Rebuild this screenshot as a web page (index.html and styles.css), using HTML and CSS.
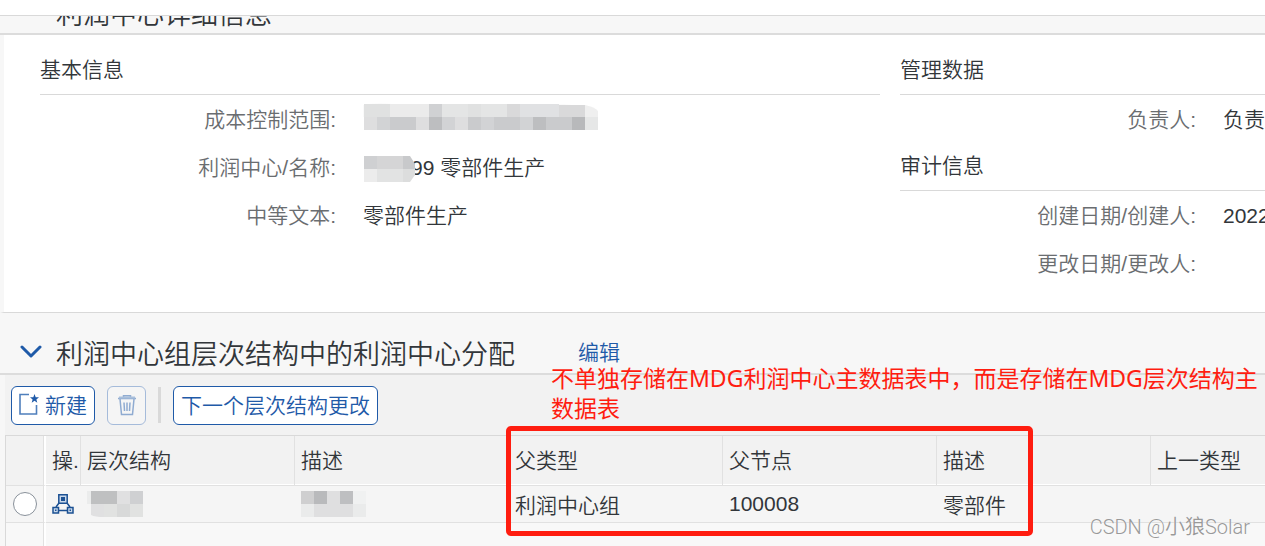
FILE: index.html
```html
<!DOCTYPE html>
<html lang="zh-CN">
	<head>
		<meta charset="UTF-8"/>
		<title>利润中心</title>
		<meta name="viewport" content="width=device-width, initial-scale=1"/>
		<link rel="stylesheet" href="styles.css">
	</head>
	<body>
		<header class="section-header section-header-scrolled">
			<h2 class="section-title">利润中心详细信息</h2>
		</header>

		<section class="details">
			<div class="group">
				<h3 class="group-title">基本信息</h3>
				<dl class="fields">
					<dt>成本控制范围:</dt>
					<dd>
						<svg class="mosaic" width="236" height="34" viewBox="0 0 236 34" aria-hidden="true">
							<path fill="#fafafa" d="M0 2Q12-1 30 1H200L220 3V14H0z"/>
							<g shape-rendering="crispEdges">
								<path fill="#e0e1e1" d="M1 1h26v13H1zM105 1h13v13h-13z"/>
								<path fill="#ebebeb" d="M27 1h39v13H27z"/>
								<path fill="#d0d1d3" d="M66 1h13v13H66z"/>
								<path fill="#e4e5e5" d="M79 1h26v13H79zM118 1h26v13h-26z"/>
								<path fill="#d9d9da" d="M144 1h13v13h-13zM196 2h26v12h-26z"/>
								<path fill="#e0e1e3" d="M157 1h39v13h-39z"/>
								<path fill="#dededf" d="M1 14h13v13H1zM53 14h13v13H53zM92 14h13v13H92z"/>
								<path fill="#d2d3d5" d="M14 14h13v13H14zM79 14h13v13H79zM118 14h13v13h-13zM157 14h13v13h-13z"/>
								<path fill="#cacbcd" d="M27 14h26v13H27zM105 14h13v13h-13zM131 14h26v13h-26zM183 14h26v13h-26z"/>
								<path fill="#bdbec0" d="M66 14h13v13H66zM170 14h13v13h-13z"/>
								<path fill="#b8b9bb" d="M209 14h13v13h-13z"/>
								<path fill="#e6e7e7" d="M222 14h13v13h-13z"/>
							</g>
							<path fill="#efefef" d="M222 2Q232 4 235 8V14H222z"/>
						</svg>
					</dd>
					<dt>利润中心/名称:</dt>
					<dd>
						<svg class="mosaic mosaic-over" width="52" height="30" viewBox="0 -2 52 30" aria-hidden="true">
							<path fill="#cfd0d2" d="M1 1h13v13H1z"/>
							<path fill="#d5d5d6" d="M14 1h26v13H14z"/>
							<path fill="#c8c9cb" d="M40 1h7l5 8v5H40z"/>
							<path fill="#ececec" d="M1 14h13v13H1z"/>
							<path fill="#e2e3e3" d="M14 14h26v13H14z"/>
							<path fill="#dcdddd" d="M40 14h12v6l-5 7h-7z"/>
						</svg><span>99 零部件生产</span>
					</dd>
					<dt>中等文本:</dt>
					<dd>零部件生产</dd>
				</dl>
			</div>
			<div class="group">
				<h3 class="group-title">管理数据</h3>
				<dl class="fields">
					<dt>负责人:</dt>
					<dd>负责人</dd>
				</dl>
				<h3 class="group-title">审计信息</h3>
				<dl class="fields">
					<dt>创建日期/创建人:</dt>
					<dd>2022</dd>
					<dt>更改日期/更改人:</dt>
					<dd></dd>
				</dl>
			</div>
		</section>

		<header class="section-header">
			<button type="button" class="toggle" aria-label="折叠">
				<svg width="22" height="14" viewBox="0 0 22 14"><path fill="none" stroke="#1f5aa8" stroke-width="3" stroke-linecap="round" stroke-linejoin="round" d="M2 2l9 9 9-9"/></svg>
			</button>
			<h2 class="section-title">利润中心组层次结构中的利润中心分配</h2>
			<a class="edit-link" href="#edit">编辑</a>
		</header>

		<section class="assignments">
			<div class="toolbar">
				<button type="button" class="btn">
					<svg width="20" height="22" viewBox="0 0 20 22" aria-hidden="true">
						<path fill="none" stroke="#4f7fbc" stroke-width="1.6" d="M10 1.5H1V21H17.500V12"/>
						<path fill="#1f5aa8" d="M15.500 1l1.200 3.200 3.300.1-2.600 2.100.9 3.400-2.800-2-2.800 2 .9-3.400L11 4.300l3.300-.1z"/>
					</svg>
					新建
				</button>
				<button type="button" class="btn btn-icon" aria-label="删除" disabled>
					<svg width="20" height="22" viewBox="0 0 20 22" aria-hidden="true">
						<g fill="none" stroke="#8fabd1" stroke-width="1.500">
							<path d="M1 4.500H19M6.500 4V1.800H13.500V4M3 5L4.500 20.500H15.500L17 5M7 8.500L7.500 17M10 8.500V17M13 8.500L12.500 17"/>
						</g>
						<path fill="#a9bfdb" d="M2 2.500h16v2H2z"/>
					</svg>
				</button>
				<span class="separator"></span>
				<button type="button" class="btn">下一个层次结构更改</button>
			</div>

			<table class="grid">
				<colgroup>
					<col class="col-select">
					<col class="col-action">
					<col class="col-data" span="6">
				</colgroup>
				<thead>
					<tr>
						<th class="cell-select"></th>
						<th>操.</th>
						<th>层次结构</th>
						<th>描述</th>
						<th>父类型</th>
						<th>父节点</th>
						<th>描述</th>
						<th>上一类型</th>
					</tr>
				</thead>
				<tbody>
					<tr>
						<td class="cell-select"><input type="radio" name="row" class="radio" aria-label="选择行"></td>
						<td>
							<svg class="hierarchy" width="22" height="22" viewBox="0 0 22 22" aria-hidden="true">
								<g fill="#c9d8ea" stroke="#1c5193" stroke-width="1.500">
									<path fill="none" d="M7 10L4 14M15 10L18 14M7 17.500H15"/>
									<path d="M6.800 1.800h8.400v8.400H6.800zM1 14.500h5.500V20H1zM15.500 14.500H21V20h-5.500z"/>
								</g>
								<path fill="#1c5193" d="M9 4h4v4H9zM3 16.500h1.500V18H3zM17.500 16.500H19V18h-1.500z"/>
							</svg>
						</td>
						<td>
							<svg class="mosaic" width="66" height="26" viewBox="0 0 66 26" aria-hidden="true">
								<path fill="#ebecec" d="M0 0h4v13H0z"/>
								<path fill="#bfc0c1" d="M4 0h26v13H4z"/>
								<path fill="#e0e0e1" d="M30 0h13v13H30zM4 13h13v13Q8 26 4 24z"/>
								<path fill="#cfd0d2" d="M43 0h13v13H43z"/>
								<path fill="#e1e2e1" d="M17 13h13v13H17zM43 13h13v13H43z"/>
								<path fill="#d8d9d9" d="M30 13h13v13H30z"/>
							</svg>
						</td>
						<td>
							<svg class="mosaic" width="66" height="26" viewBox="0 0 66 26" aria-hidden="true">
								<path fill="#cfcfd0" d="M0 0h13v13H0z"/>
								<path fill="#b9babc" d="M13 0h13v13H13z"/>
								<path fill="#dfdfe0" d="M26 0h13v13H26zM13 13h39v13H13z"/>
								<path fill="#bebfc1" d="M39 0h13v13H39z"/>
								<path fill="#eaebeb" d="M52 13h13v13H52zM0 13h13v13H0z"/>
								<path fill="#f0f1f1" d="M52 0h13v13H52z"/>
							</svg>
						</td>
						<td>利润中心组</td>
						<td>100008</td>
						<td>零部件</td>
						<td></td>
					</tr>
					<tr class="row-empty">
						<td class="cell-select"></td>
						<td colspan="7"></td>
					</tr>
				</tbody>
			</table>

			<!-- annotations over the table -->
			<p class="note">不单独存储在MDG利润中心主数据表中，而是存储在MDG层次结构主数据表</p>
			<div class="highlight"></div>
		</section>

		<div class="watermark">CSDN @小狼Solar</div>
	</body>
</html>
```
FILE: styles.css
```css
* {
	box-sizing: border-box;
}

html, body {
	height: 100%;
}

body {
	position: relative;
	display: flex;
	flex-direction: column;
	margin: 0;
	padding-top: 15px;
	overflow: hidden;
	background: #fff;
	color: #32363a;
	font-family: "Liberation Sans", "Noto Sans CJK SC", sans-serif;
	font-size: 21px;
	font-weight: 350;
}

h2, h3, dl, dd, p {
	margin: 0;
	font-weight: 350;
}

/* section headers */
.section-header {
	display: flex;
	flex: none;
	align-items: flex-end;
	padding: 24px 0 0 20px;
	background: #f7f7f7;
	border-bottom: 2px solid #dcdcdc;
}

/* header that is already half way under the top bar */
.section-header-scrolled {
	height: 20px;
	padding: 0 0 0 56px;
	overflow: hidden;
	border-top: 1px solid #d9d9d9;
}

.section-title {
	font-size: 27px;
	line-height: 36px;
	white-space: nowrap;
}

.toggle {
	display: flex;
	align-items: center;
	width: 36px;
	height: 36px;
	padding: 0 0 6px;
	border: 0;
	background: none;
}

.edit-link {
	margin-left: 63px;
	padding-bottom: 4px;
	color: #1f5aa8;
	line-height: 32px;
	text-decoration: none;
}

/* details */
.details {
	display: grid;
	flex: none;
	grid-template-columns: repeat(2, minmax(840px, 1fr));
	gap: 20px;
	padding: 12px 36px 25px;
	border-left: 4px solid #f7f7f7;
	border-bottom: 1px solid #d9d9d9;
}

.group-title {
	padding-bottom: 2px;
	border-bottom: 1px solid #d9d9d9;
	font-size: 21px;
	line-height: 45px;
}

.fields {
	display: grid;
	grid-template-columns: 296px 1fr;
	grid-auto-rows: 48px;
	column-gap: 27px;
	line-height: 46px;
}

.fields dt, .fields dd {
	padding-top: 2px;
}

.fields dt {
	color: #6a6d70;
	text-align: right;
}

.fields dd {
	display: flex;
	align-items: center;
}

.mosaic {
	display: block;
	flex: none;
}

.mosaic-over {
	z-index: 1;
	margin-right: -4px;
}

/* assignments */
.assignments {
	position: relative;
	flex: 1;
	min-height: 0;
	padding-left: 5px;
	background: #f7f7f7;
}

.toolbar {
	display: flex;
	align-items: center;
	gap: 12px;
	height: 60px;
	padding-left: 6px;
	background: #f2f2f2;
}

.btn {
	display: flex;
	align-items: center;
	gap: 6px;
	height: 39px;
	padding: 0 7px 2px;
	border: 1px solid #1f5aa8;
	border-radius: 6px;
	background: #fff;
	color: #1f5aa8;
	font: inherit;
	white-space: nowrap;
}

.btn-icon {
	width: 39px;
	padding: 0;
	justify-content: center;
}

.btn:disabled {
	border-color: #a5bbda;
	background: #f5f5f5;
}

.separator {
	width: 3px;
	height: 36px;
	background: #d9d9d9;
}

.grid {
	width: 1360px;
	min-width: 100%;
	border-top: 1px solid #d9d9d9;
	border-left: 1px solid #d9d9d9;
	border-spacing: 0;
	table-layout: fixed;
}

.col-select {
	width: 40px;
}

.col-action {
	width: 35px;
}

.col-data {
	width: 214px;
}

.grid th, .grid td {
	padding: 0 0 0 6px;
	font-weight: 350;
	text-align: left;
	white-space: nowrap;
}

.grid th {
	height: 50px;
	padding-bottom: 4px;
	border-right: 1px solid #e1e1e1;
	border-bottom: 1px solid #e1e1e1;
	background: #f2f2f2;
	box-shadow: inset 0 -1px #fff;
}

.grid td {
	height: 37px;
	border-bottom: 1px solid #e1e1e1;
	background: #f5f5f5;
}

.grid .cell-select {
	padding: 0;
	border-right: 2px solid #fff;
	box-shadow: inset -1px 0 #e1e1e1;
}

.grid .row-empty td {
	height: 60px;
	background: #f8f8f8;
}

.radio {
	display: block;
	width: 24px;
	height: 24px;
	margin: 0 auto;
	border: 1px solid #89919a;
	border-radius: 50%;
	background: #fff;
	appearance: none;
}

.hierarchy {
	display: block;
}

/* annotations */
.note {
	position: absolute;
	top: -12px;
	left: 551px;
	right: 0;
	color: #ff1d10;
	font-family: "Noto Sans", "Noto Sans CJK SC", sans-serif;
	font-size: 23px;
	font-weight: 400;
	line-height: 30px;
}

.highlight {
	position: absolute;
	top: 51px;
	left: 506px;
	width: 527px;
	height: 110px;
	border: 5px solid #ff1d10;
	border-radius: 5px;
}

.watermark {
	position: absolute;
	right: 15px;
	bottom: 6px;
	color: #999;
	font-family: Roboto, "Noto Sans CJK SC", sans-serif;
	font-size: 20px;
	line-height: 26px;
	text-shadow: 0 0 1px #fff;
}
```
